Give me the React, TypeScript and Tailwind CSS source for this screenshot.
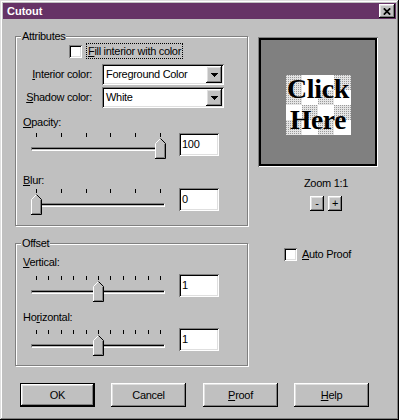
import React from 'react';

const raised =
  'shadow-[inset_-1px_-1px_0_#000,inset_1px_1px_0_#fff,inset_-2px_-2px_0_#808080,inset_2px_2px_0_#dfdfdf]';
const sunken =
  'shadow-[inset_1px_1px_0_#808080,inset_-1px_-1px_0_#fff,inset_2px_2px_0_#000,inset_-2px_-2px_0_#dfdfdf]';
const windowFrame =
  'shadow-[inset_-1px_-1px_0_#000,inset_1px_1px_0_#dfdfdf,inset_-2px_-2px_0_#808080,inset_2px_2px_0_#fff]';

const Key = ({ children }: { children: React.ReactNode }) => (
  <span className="underline decoration-1 underline-offset-[1px]">{children}</span>
);

const Group = ({ label, className, children }: { label: string; className: string; children: React.ReactNode }) => (
  <div className={`relative w-[233px] border border-[#808080] shadow-[inset_1px_1px_0_#fff,1px_1px_0_#fff] ${className}`}>
    <span className="absolute -top-[7px] left-[5px] bg-[#c0c0c0] px-[1px]">{label}</span>
    {children}
  </div>
);

const Checkbox = () => <div className={`w-[13px] h-[13px] shrink-0 bg-white ${sunken}`} />;

const Thumb = ({ left }: { left: number }) => (
  <svg width="11" height="21" viewBox="0 0 11 21" className="absolute top-[5px]" style={{ left }}>
    <path d="M0.5 20.5V5.5L5.5 0.5L10.5 5.5V20.5Z" fill="#c0c0c0" />
    <path d="M0.5 20V5.5L5.5 0.5" fill="none" stroke="#fff" />
    <path d="M5.5 0.5L10.5 5.5V20.5H0" fill="none" stroke="#000" />
    <path d="M9.5 6V19.5H1" fill="none" stroke="#808080" />
  </svg>
);

const Slider = ({ ticks, value, className = '' }: { ticks: number; value: number; className?: string }) => (
  <div className={`relative w-[135px] h-[26px] shrink-0 ${className}`}>
    <div className="absolute top-0 left-[5px] w-[125px] flex justify-between">
      {Array.from({ length: ticks }).map((_, i) => (
        <div key={i} className="w-px h-[4px] bg-black" />
      ))}
    </div>
    <div className="absolute top-[14px] left-0 w-[134px] h-[4px] border border-t-[#808080] border-l-[#808080] border-b-white border-r-white">
      <div className="h-px bg-black" />
    </div>
    <Thumb left={value * 124} />
  </div>
);

const NumberBox = ({ value }: { value: string }) => (
  <div className={`w-[40px] h-[23px] shrink-0 bg-white pl-[3px] flex items-center ${sunken}`}>{value}</div>
);

const Dropdown = ({ value }: { value: string }) => (
  <div className={`w-[122px] h-[21px] bg-white p-[2px] flex items-center ${sunken}`}>
    <span className="flex-1 pl-[2px]">{value}</span>
    <div className={`w-[16px] h-[17px] bg-[#c0c0c0] flex items-center justify-center ${raised}`}>
      <svg width="7" height="4" viewBox="0 0 7 4" shapeRendering="crispEdges">
        <path d="M0 0H7V1H6V2H5V3H4V4H3V3H2V2H1V1H0Z" fill="#000" />
      </svg>
    </div>
  </div>
);

const Button = ({ children, primary = false, className = '' }: { children: React.ReactNode; primary?: boolean; className?: string }) => (
  <div
    className={`w-[75px] h-[24px] flex items-center justify-center bg-[#c0c0c0] ${primary ? 'border border-black' : ''} ${className}`}
  >
    <div className={`w-full h-full flex items-center justify-center ${raised}`}>{children}</div>
  </div>
);

const cells = [
  [1, 0, 0, 1],
  [1, 0, 1, 0],
  [0, 1, 0, 1],
  [1, 0, 1, 0],
];

const ClickHere = () => (
  <svg width="65" height="60" viewBox="0 0 65 60">
    <defs>
      <pattern id="dots" width="2" height="2" patternUnits="userSpaceOnUse">
        <rect width="2" height="2" fill="#e4e4e4" />
        <rect width="1" height="1" fill="#9a9a9a" />
      </pattern>
    </defs>
    <rect width="65" height="60" fill="#fff" />
    {cells.map((row, r) =>
      row.map((on, c) =>
        on ? <rect key={`${r}-${c}`} x={c * 16} y={r * 15} width={c === 3 ? 17 : 16} height="15" fill="url(#dots)" /> : null
      )
    )}
    <text
      x="1"
      y="23"
      fontFamily="'Liberation Serif', serif"
      fontWeight="bold"
      fontSize="27"
      textLength="62"
      lengthAdjust="spacingAndGlyphs"
    >
      Click
    </text>
    <text
      x="4"
      y="54"
      fontFamily="'Liberation Serif', serif"
      fontWeight="bold"
      fontSize="27"
      textLength="56"
      lengthAdjust="spacingAndGlyphs"
    >
      Here
    </text>
  </svg>
);

export default function App() {
  return (
    <div
      className={`w-[399px] h-[420px] bg-[#c0c0c0] p-[3px] text-[11px] leading-[13px] tracking-[-0.3px] text-black font-['Liberation_Sans',Arial,sans-serif] ${windowFrame}`}
    >
      <div className="h-[16px] bg-[#663366] flex items-center justify-between pl-[4px] pr-[1px]">
        <span className="text-white font-bold tracking-normal">Cutout</span>
        <div className={`w-[16px] h-[14px] bg-[#c0c0c0] flex items-center justify-center ${raised}`}>
          <svg width="8" height="7" viewBox="0 0 8 7">
            <path d="M0.8 0.3L7.2 6.7M7.2 0.3L0.8 6.7" stroke="#000" strokeWidth="1.7" />
          </svg>
        </div>
      </div>

      <div className="flex pl-[12px] pt-[17px]">
        <div className="flex flex-col w-[234px]">
          <Group label="Attributes" className="h-[190px]">
            <div className="flex items-center mt-[6px] pl-[53px] h-[16px]">
              <Checkbox />
              <span className="ml-[4px] h-[16px] px-[1px] flex items-center border border-dotted border-black">
                <Key>F</Key>ill interior with color
              </span>
            </div>
            <div className="flex items-center mt-[5px]">
              <span className="w-[70px] ml-[6px] text-right">
                <Key>I</Key>nterior color:
              </span>
              <div className="ml-[10px]">
                <Dropdown value="Foreground Color" />
              </div>
            </div>
            <div className="flex items-center mt-[2px]">
              <span className="w-[70px] ml-[6px] text-right">
                <Key>S</Key>hadow color:
              </span>
              <div className="ml-[10px]">
                <Dropdown value="White" />
              </div>
            </div>
            <div className="mt-[8px] pl-[7px]">
              <Key>O</Key>pacity:
            </div>
            <div className="flex items-start mt-[4px] pl-[15px]">
              <Slider ticks={6} value={1} />
              <div className="ml-[13px]">
                <NumberBox value="100" />
              </div>
            </div>
            <div className="mt-[15px] pl-[7px]">
              <Key>B</Key>lur:
            </div>
            <div className="flex items-start mt-[1px] pl-[15px]">
              <Slider ticks={6} value={0} className="mt-[1px]" />
              <div className="ml-[13px]">
                <NumberBox value="0" />
              </div>
            </div>
          </Group>

          <Group label="Offset" className="h-[123px] mt-[17px]">
            <div className="mt-[12px] pl-[7px]">
              <Key>V</Key>ertical:
            </div>
            <div className="flex items-start mt-[5px] pl-[15px]">
              <Slider ticks={11} value={0.5} className="mt-[2px]" />
              <div className="ml-[13px]">
                <NumberBox value="1" />
              </div>
            </div>
            <div className="mt-[9px] pl-[7px]">
              Ho<Key>r</Key>izontal:
            </div>
            <div className="flex items-start mt-[4px] pl-[15px]">
              <Slider ticks={11} value={0.5} className="mt-[2px]" />
              <div className="ml-[13px]">
                <NumberBox value="1" />
              </div>
            </div>
          </Group>
        </div>

        <div className="ml-[9px] w-[136px] flex flex-col items-center">
          <div className="self-start mt-[1px] w-[120px] h-[130px] bg-[#808080] flex items-center justify-center pt-[6px] shadow-[inset_1px_1px_0_#808080,inset_-1px_-1px_0_#fff,inset_3px_3px_0_#000,inset_-3px_-3px_0_#000]">
            <ClickHere />
          </div>
          <div className="mt-[10px]">Zoom 1:1</div>
          <div className="flex gap-[4px] mt-[6px]">
            <div className={`w-[14px] h-[15px] flex items-center justify-center ${raised}`}>-</div>
            <div className={`w-[14px] h-[15px] flex items-center justify-center ${raised}`}>+</div>
          </div>
          <div className="self-start ml-[26px] mt-[37px] flex items-center gap-[5px]">
            <Checkbox />
            <span>
              <Key>A</Key>uto Proof
            </span>
          </div>
        </div>
      </div>

      <div className="flex pl-[17px] mt-[17px] gap-[16px]">
        <Button primary>OK</Button>
        <Button>Cancel</Button>
        <Button className="ml-[1px]">
          <span>
            <Key>P</Key>roof
          </span>
        </Button>
        <Button>
          <span>
            <Key>H</Key>elp
          </span>
        </Button>
      </div>
    </div>
  );
}
